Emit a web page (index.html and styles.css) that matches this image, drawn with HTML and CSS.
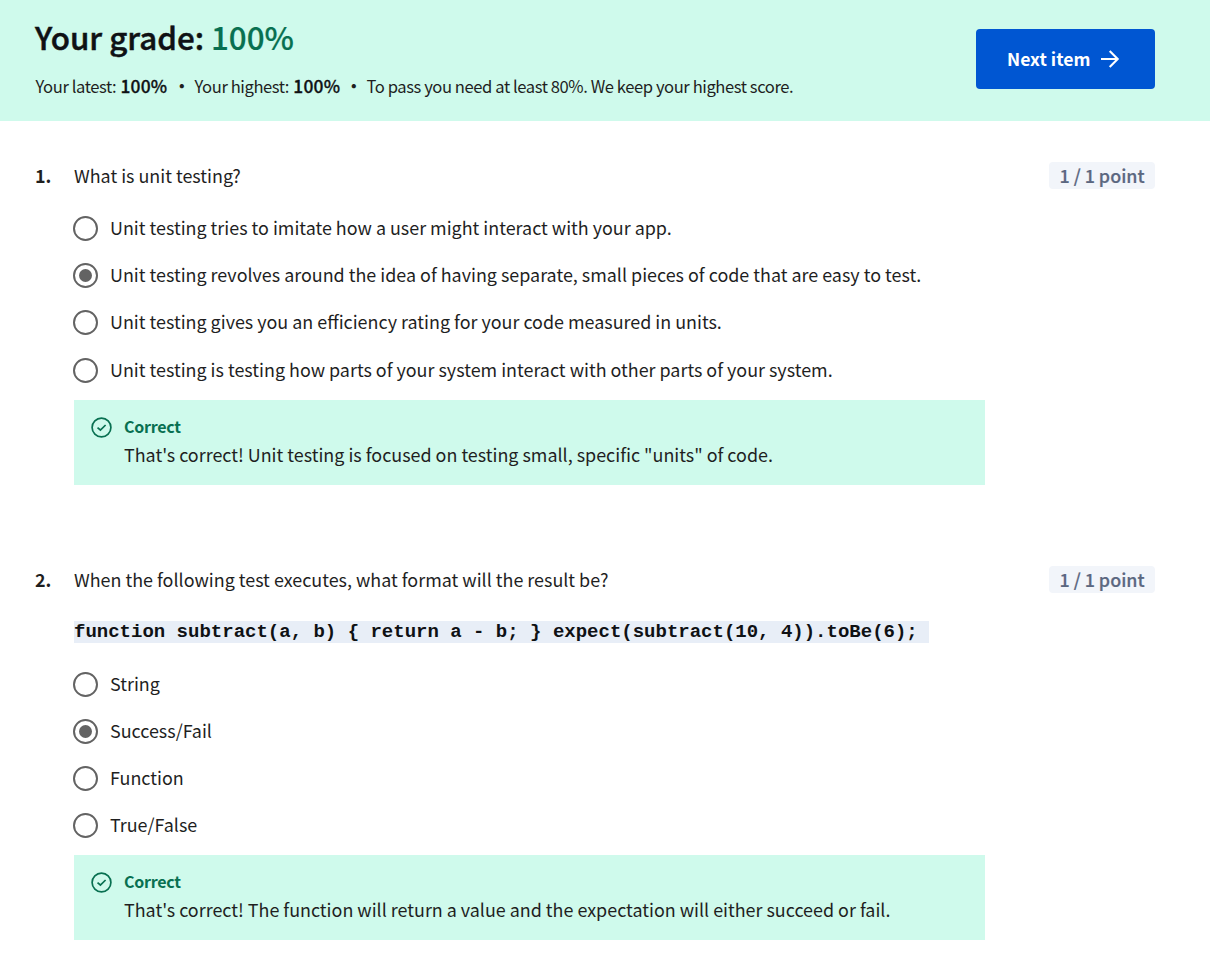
FILE: index.html
```html
<!DOCTYPE html>
<html lang="en">
<head>
<meta charset="utf-8">
<title>Quiz results</title>
<link rel="stylesheet" href="styles.css">
</head>
<body>
<header class="grade-bar">
  <div class="grade-info">
    <h1 class="grade-title">Your grade: <span class="grade-value">100%</span></h1>
    <p class="grade-meta">
      <span class="meta-latest">Your latest: <b>100%</b></span><span class="dot">•</span><span class="meta-highest">Your highest: <b>100%</b></span><span class="dot">•</span><span class="meta-pass">To pass you need at least 80%. We keep your highest score.</span>
    </p>
  </div>
  <button class="next-button" type="button">
    <span>Next item</span>
    <svg class="arrow" viewBox="0 0 20 20" width="20" height="20"><path d="M1 10H17.5M9.7 2L17.7 10L9.7 18" fill="none" stroke="#fff" stroke-width="2.1"/></svg>
  </button>
</header>
<main class="quiz">
  <section class="question">
    <div class="number">1.</div>
    <div class="body">
      <p class="prompt">What is unit testing?</p>
      <ul class="options">
        <li class="option"><span class="radio"></span><span class="label">Unit testing tries to imitate how a user might interact with your app.</span></li>
        <li class="option"><span class="radio checked"></span><span class="label">Unit testing revolves around the idea of having separate, small pieces of code that are easy to test.</span></li>
        <li class="option"><span class="radio"></span><span class="label">Unit testing gives you an efficiency rating for your code measured in units.</span></li>
        <li class="option"><span class="radio"></span><span class="label">Unit testing is testing how parts of your system interact with other parts of your system.</span></li>
      </ul>
      <div class="feedback">
        <svg class="check" viewBox="0 0 22 22" width="22" height="22"><g fill="none" stroke="#087051" stroke-width="1.7"><circle cx="10.5" cy="11.5" r="9.4"/><path d="M6.5 11.6L9.4 14L14.6 9"/></g></svg>
        <div>
          <p class="verdict">Correct</p>
          <p class="explain">That's correct! Unit testing is focused on testing small, specific "units" of code.</p>
        </div>
      </div>
    </div>
    <div class="points">1 / 1 point</div>
  </section>
  <section class="question">
    <div class="number">2.</div>
    <div class="body">
      <p class="prompt">When the following test executes, what format will the result be?</p>
      <p class="code-line"><code class="code">function subtract(a, b) { return a - b; } expect(subtract(10, 4)).toBe(6); </code></p>
      <ul class="options compact">
        <li class="option"><span class="radio"></span><span class="label">String</span></li>
        <li class="option"><span class="radio checked"></span><span class="label">Success/Fail</span></li>
        <li class="option"><span class="radio"></span><span class="label">Function</span></li>
        <li class="option"><span class="radio"></span><span class="label">True/False</span></li>
      </ul>
      <div class="feedback">
        <svg class="check" viewBox="0 0 22 22" width="22" height="22"><g fill="none" stroke="#087051" stroke-width="1.7"><circle cx="10.5" cy="11.5" r="9.4"/><path d="M6.5 11.6L9.4 14L14.6 9"/></g></svg>
        <div>
          <p class="verdict">Correct</p>
          <p class="explain">That's correct! The function will return a value and the expectation will either succeed or fail.</p>
        </div>
      </div>
    </div>
    <div class="points">1 / 1 point</div>
  </section>
</main>
</body>
</html>
```
FILE: styles.css
```css
* { box-sizing: border-box; }
body {
  margin: 0;
  background: #fff;
  color: #1f1f1f;
  font-family: "Noto Sans CJK SC", "Noto Sans", sans-serif;
  font-size: 17.92px;
  line-height: 26px;
}
h1, p, ul { margin: 0; padding: 0; }
ul { list-style: none; }

.grade-bar {
  display: flex;
  justify-content: space-between;
  align-items: flex-start;
  height: 121px;
  padding: 13px 55px 0 35px;
  background: #cffaec;
}
.grade-title {
  font-size: 31.3px;
  font-weight: 500;
  line-height: 48px;
  color: #0f1114;
  white-space: nowrap;
  -webkit-text-stroke: 0.5px currentColor;
}
.grade-value {
  color: #087051;
  -webkit-text-stroke-width: 0.2px;
}
.grade-meta {
  display: flex;
  margin-top: 11px;
  padding-left: 0.5px;
  font-size: 16.6px;
  line-height: 28px;
  letter-spacing: -0.43px;
  white-space: nowrap;
}
.grade-meta span { white-space: pre; }
.grade-meta b {
  margin-left: 1px;
  font-size: 17.4px;
  font-weight: 500;
  letter-spacing: 0.2px;
  color: #0f1114;
  -webkit-text-stroke: 0.3px currentColor;
}
.meta-latest { width: 133px; }
.meta-highest { width: 146px; }
.dot {
  width: 26px;
  text-align: center;
  font-weight: 700;
}

.next-button {
  display: flex;
  align-items: center;
  gap: 10px;
  width: 179px;
  height: 60px;
  margin-top: 16px;
  padding: 0 0 0 31px;
  border: 0;
  border-radius: 4px;
  background: #0056d2;
  color: #fff;
  font: 700 17.6px/28px "Noto Sans CJK SC", sans-serif;
  white-space: nowrap;
}

.quiz { padding: 41px 55px 0 35px; }
.question {
  display: grid;
  grid-template-columns: 39px 911px 1fr;
}
.question + .question { margin-top: 81px; }
.number { font-weight: 700; }
.prompt, .label, .explain { height: 28px; }
.options { margin-top: 14px; }
.option {
  display: flex;
  align-items: center;
  height: 47.3px;
  white-space: nowrap;
}
.compact .option { height: 47.1px; }
.radio {
  display: grid;
  place-items: center;
  width: 25px;
  height: 25px;
  margin: 1px 12.4px 0 -1.4px;
  border: 2.5px solid #636363;
  border-radius: 50%;
}
.checked::after {
  content: "";
  width: 13px;
  height: 13px;
  border-radius: 50%;
  background: #636363;
}
.code-line {
  display: flex;
  height: 22px;
  margin: 27px 0 17px;
}
.code {
  height: 22px;
  background: #e8eef7;
  color: #0f1114;
  font: 700 19px/23px "Liberation Mono", monospace;
  white-space: pre;
}
.feedback {
  display: flex;
  gap: 11px;
  height: 85px;
  margin-top: 6.8px;
  padding: 13px 17px;
  background: #cffaec;
}
.compact + .feedback { margin-top: 6.6px; }
.check { margin-top: 3px; flex: none; }
.verdict {
  height: 28px;
  font-size: 16px;
  font-weight: 700;
  letter-spacing: -0.25px;
  color: #087051;
}
.points {
  justify-self: end;
  width: 106px;
  height: 27px;
  border-radius: 4px;
  background: #f2f5fa;
  color: #5b6780;
  font-weight: 500;
  line-height: 27px;
  text-align: center;
  -webkit-text-stroke: 0.2px currentColor;
}
```
